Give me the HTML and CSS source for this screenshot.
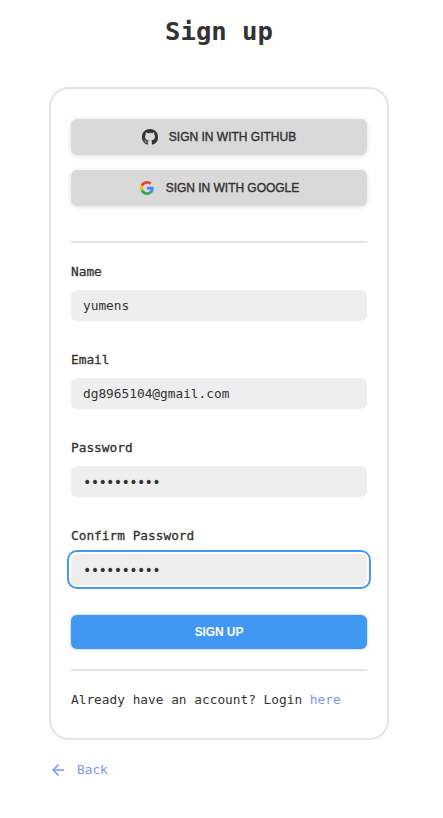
FILE: index.html
```html
<!DOCTYPE html>
<html lang="en">
<head>
<meta charset="utf-8">
<title>Sign up</title>
<link rel="stylesheet" href="styles.css">
</head>
<body>
<main class="page">
  <h1 class="title">Sign up</h1>
  <form class="card">
    <button type="button" class="btn btn-social">
      <svg class="icon-github" viewBox="0 0 16 16" width="16" height="16" fill="#333" stroke="#333" stroke-width=".25"><path d="M8 0C3.58 0 0 3.58 0 8c0 3.54 2.29 6.53 5.47 7.59.4.07.55-.17.55-.38 0-.19-.01-.82-.01-1.49-2.01.37-2.53-.49-2.69-.94-.09-.23-.48-.94-.82-1.13-.28-.15-.68-.52-.01-.53.63-.01 1.08.58 1.23.82.72 1.21 1.87.87 2.33.66.07-.52.28-.87.51-1.07-1.78-.2-3.64-.89-3.64-3.95 0-.87.31-1.59.82-2.15-.08-.2-.36-1.02.08-2.12 0 0 .67-.21 2.2.82.64-.18 1.32-.27 2-.27s1.36.09 2 .27c1.53-1.04 2.2-.82 2.2-.82.44 1.1.16 1.92.08 2.12.51.56.82 1.27.82 2.15 0 3.07-1.87 3.75-3.65 3.95.29.25.54.73.54 1.48 0 1.07-.01 1.93-.01 2.2 0 .21.15.46.55.38A8.01 8.01 0 0 0 16 8c0-4.42-3.58-8-8-8z"/></svg>
      <span>SIGN IN WITH GITHUB</span>
    </button>
    <button type="button" class="btn btn-social btn-google">
      <svg viewBox="0 0 48 48" width="14" height="14"><path fill="#EA4335" d="M24 9.5c3.54 0 6.71 1.22 9.21 3.6l6.85-6.85C35.9 2.38 30.47 0 24 0 14.62 0 6.51 5.38 2.56 13.22l7.98 6.19C12.43 13.72 17.74 9.5 24 9.5z"/><path fill="#4285F4" d="M46.98 24.55c0-1.57-.15-3.09-.38-4.55H24v9.02h12.94c-.58 2.96-2.26 5.48-4.78 7.18l7.73 6c4.51-4.18 7.09-10.36 7.09-17.65z"/><path fill="#FBBC05" d="M10.53 28.59c-.48-1.45-.76-2.99-.76-4.59s.27-3.14.76-4.59l-7.98-6.19C.92 16.46 0 20.12 0 24c0 3.88.92 7.54 2.56 10.78l7.97-6.19z"/><path fill="#34A853" d="M24 48c6.48 0 11.93-2.13 15.89-5.81l-7.73-6c-2.15 1.45-4.92 2.3-8.16 2.3-6.26 0-11.57-4.22-13.47-9.91l-7.98 6.19C6.51 42.62 14.62 48 24 48z"/></svg>
      <span>SIGN IN WITH GOOGLE</span>
    </button>
    <hr class="rule rule-top">
    <label class="field">Name<input class="input" type="text" value="yumens"></label>
    <label class="field">Email<input class="input" type="text" value="dg8965104@gmail.com"></label>
    <label class="field">Password<input class="input input-secret" type="password" value="aaaaaaaaaa"></label>
    <label class="field field-last">Confirm Password<input class="input input-secret input-active" type="password" value="aaaaaaaaaa"></label>
    <button type="button" class="btn btn-primary">SIGN UP</button>
    <hr class="rule rule-bottom">
    <p class="login">Already have an account? Login <a class="link" href="#">here</a></p>
  </form>
  <a class="link back" href="#">
    <svg viewBox="0 0 12 12" width="12" height="12" fill="none" stroke="currentColor" stroke-width="1.5"><path d="M12 6H1M6.500 .6 1 6l5.500 5.400"/></svg>
    <span>Back</span>
  </a>
</main>
</body>
</html>
```

FILE: styles.css
```css
* { box-sizing: border-box; }
body {
  margin: 0;
  background: #fff;
  color: #333;
  font: 12.8px/16px "DejaVu Sans Mono", monospace;
}
.page {
  width: 340px;
  margin-left: 49px;
}
.title {
  margin: 0;
  padding-top: 15px;
  height: 87px;
  font-size: 25.6px;
  line-height: 32px;
  text-align: center;
}
.card {
  height: 653px;
  padding: 30px 20px 0;
  border: 2px solid #e4e4e4;
  border-radius: 20px;
}
.btn {
  display: flex;
  align-items: center;
  justify-content: center;
  width: 100%;
  padding: 0;
  border: 0;
  border-radius: 6px;
  font: 12px/16px "Liberation Sans", sans-serif;
}
.btn-social {
  height: 36px;
  margin-bottom: 15px;
  gap: 11px;
  background: #d9d9d9;
  color: #333;
  box-shadow: 0 1px 5px rgba(0, 0, 0, .13);
  -webkit-text-stroke: .4px #333;
}
.btn-google {
  gap: 12px;
  padding-left: 1px;
  letter-spacing: -.03px;
}
.rule {
  height: 2px;
  margin: 0;
  border: 0;
  background: #e4e4e4;
}
.rule-top { margin: 35px 0 21px; }
.field {
  display: block;
  height: 88px;
  -webkit-text-stroke: .3px #333;
}
.field-last { height: 87px; }
.input {
  display: block;
  width: 100%;
  height: 31px;
  margin-top: 10px;
  padding: 0 12px;
  border: 0;
  border-radius: 6px;
  outline: 0;
  background: #eee;
  color: #333;
  font: inherit;
  -webkit-text-stroke: 0;
}
.input-secret {
  font-size: 14px;
  letter-spacing: -.73px;
}
.input-active { box-shadow: 0 0 0 2px #fff, 0 0 0 4px #4299f2; }
.btn-primary {
  height: 34px;
  margin-bottom: 20px;
  background: #4098f2;
  color: #fff;
  font-weight: bold;
  letter-spacing: -.1px;
  box-shadow: 0 0 3px rgba(64, 152, 242, .6);
}
.login { margin: 21px 0 0; white-space: nowrap; }
.link { color: #7799ee; text-decoration: none; }
.back {
  display: flex;
  align-items: center;
  gap: 13px;
  margin: 22px 0 0 3px;
}
```
